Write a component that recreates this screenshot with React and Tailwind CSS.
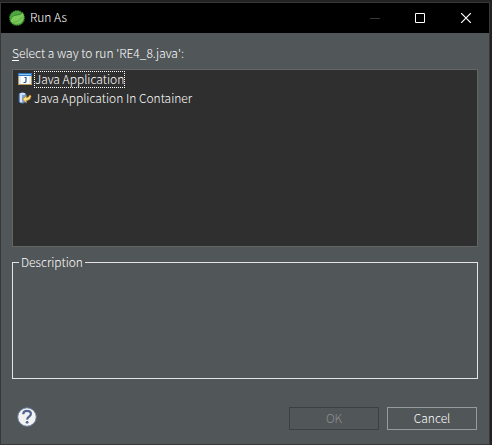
import React from "react";

function SpringIcon() {
  return (
    <svg width="16" height="16" viewBox="0 0 16 16" aria-hidden="true">
      <circle cx="8" cy="8" r="7.3" fill="#4fa83c" />
      <circle cx="8" cy="8" r="7.600" fill="none" stroke="#3f9136" strokeWidth="1" strokeDasharray="1.3 1.1" />
      <path d="M1.800 11.400C1.400 7.600 4 5.700 8 5.300c2.800-.2 4.700-.9 6-2.800 1.600 4.400.7 9.900-4.300 11-2.800.6-5.500-.2-7.900-2.100z" fill="#7cca5a" />
      <path d="M4.500 12.200c3.700-.3 6.700-1.900 8.500-5" fill="none" stroke="#4c9c3f" strokeWidth=".7" />
      <path d="M1.700 10.200C2 6.700 4.600 5.200 8 4.900c2.500-.2 4.400-.9 5.600-2.600" fill="none" stroke="#2b7430" strokeWidth=".7" />
    </svg>
  );
}

function JavaAppIcon() {
  return (
    <svg width="14" height="12" viewBox="0 0 14 12" aria-hidden="true">
      <rect width="14" height="12" fill="#b99a55" />
      <rect width="14" height="3" fill="#2f78c4" />
      <rect x="1" y="1" width="12" height="1" fill="#8fc7f5" />
      <rect x="1" y="3" width="12" height="8" fill="#d9eafa" />
      <rect x="3" y="3" width="8" height="8" fill="#fff" />
      <path d="M6.500 4.500H8v3.700Q8 9.500 6.700 9.500H5.500" fill="none" stroke="#21578a" strokeWidth="1.200" />
    </svg>
  );
}

function ContainerIcon() {
  return (
    <svg width="14" height="12" viewBox="0 0 14 12" aria-hidden="true">
      <path d="M1 2Q4.500-.5 8 2v8Q4.500 12.500 1 10z" fill="#7fa5d8" stroke="#41659f" strokeWidth=".8" />
      <path d="M3 2.500v8" stroke="#dfeafa" strokeWidth="1.800" />
      <ellipse cx="4.500" cy="1.900" rx="3" ry="1.100" fill="#d2e1f5" />
      <path d="M4.500 7.200 8.500 3.500V5.500q2.500 0 3-2.500 1.800 0 1.600 1.500Q12.500 8.500 8.500 8.700V11z" fill="#f8dc86" stroke="#a97620" strokeWidth=".7" />
    </svg>
  );
}

function HelpIcon() {
  return (
    <svg width="20" height="20" viewBox="0 0 20 20" aria-hidden="true">
      <circle cx="10" cy="10" r="9.300" fill="#f2f2f2" stroke="#60779f" strokeWidth="1" />
      <path d="M6.200 7.300C6.300 4.900 7.800 3.900 10 3.900c2.300 0 3.900 1.200 3.900 3.100 0 2.700-3.600 2.700-3.800 5.600" fill="none" stroke="#536591" strokeWidth="2.200" />
      <circle cx="10.100" cy="15.300" r="1.400" fill="#536591" />
    </svg>
  );
}

export default function App() {
  return (
    <div className="flex min-h-screen bg-[#222222] pt-0.5 pr-0.5 font-['Noto_Sans_CJK_KR','Noto_Sans',sans-serif] text-xs font-light text-white">
      <main className="flex flex-1 flex-col border border-[#383838] bg-[#515658]">
        <header className="flex h-[30px] items-center bg-black pl-2">
          <SpringIcon />
          <h1 className="ml-[5px] flex-1 pb-0.5 font-light leading-[14px]">Run As</h1>
          <button aria-label="Minimize" disabled className="flex h-full w-[45px] items-center justify-center text-[#383838]">
            <svg width="10" height="10" viewBox="0 0 10 10"><path d="M0 5.500h10" stroke="currentColor" /></svg>
          </button>
          <button aria-label="Maximize" className="flex h-full w-[45px] items-center justify-center">
            <svg width="10" height="10" viewBox="0 0 10 10"><path d="M.5.5h9v9h-9z" fill="none" stroke="currentColor" /></svg>
          </button>
          <button aria-label="Close" className="flex h-full w-[47px] items-center justify-center">
            <svg width="10" height="10" viewBox="0 0 10 10"><path d="m0 0 10 10M10 0 0 10" stroke="currentColor" strokeWidth="1.200" /></svg>
          </button>
        </header>

        <div className="flex flex-1 flex-col px-[11px] pt-3 pb-3.5">
          <p id="prompt" className="mb-1 h-5 leading-4">
            <span className="underline underline-offset-2">S</span>elect a way to run 'RE4_8.java':
          </p>
          <div role="listbox" aria-labelledby="prompt" className="h-[178px] border border-[#646464] bg-[#2f2f2f] pl-[5px]">
            <div role="option" aria-selected="true" className="flex h-[18px] items-center gap-0.5">
              <JavaAppIcon />
              <span className="border border-dotted border-white pb-0.5 leading-[13px]">Java Application</span>
            </div>
            <div role="option" aria-selected="false" className="flex h-5 items-center gap-0.5">
              <ContainerIcon />
              <span className="pb-0.5 leading-[13px]">Java Application In Container</span>
            </div>
          </div>

          <fieldset className="mt-[6px] h-[126px] border border-[#e4e4e4] pl-1.5">
            <legend className="px-[2px] leading-[18px]">Description</legend>
          </fieldset>

          <footer className="mt-auto flex items-start gap-2 pr-px">
            <button aria-label="Help" className="mr-auto ml-[5px]">
              <HelpIcon />
            </button>
            <button disabled className="h-[23px] w-[90px] border border-[#3d4041] pb-0.5 text-[#8e9192]">OK</button>
            <button className="h-[23px] w-[90px] border border-[#989a9b] pb-0.5">Cancel</button>
          </footer>
        </div>
      </main>
    </div>
  );
}
